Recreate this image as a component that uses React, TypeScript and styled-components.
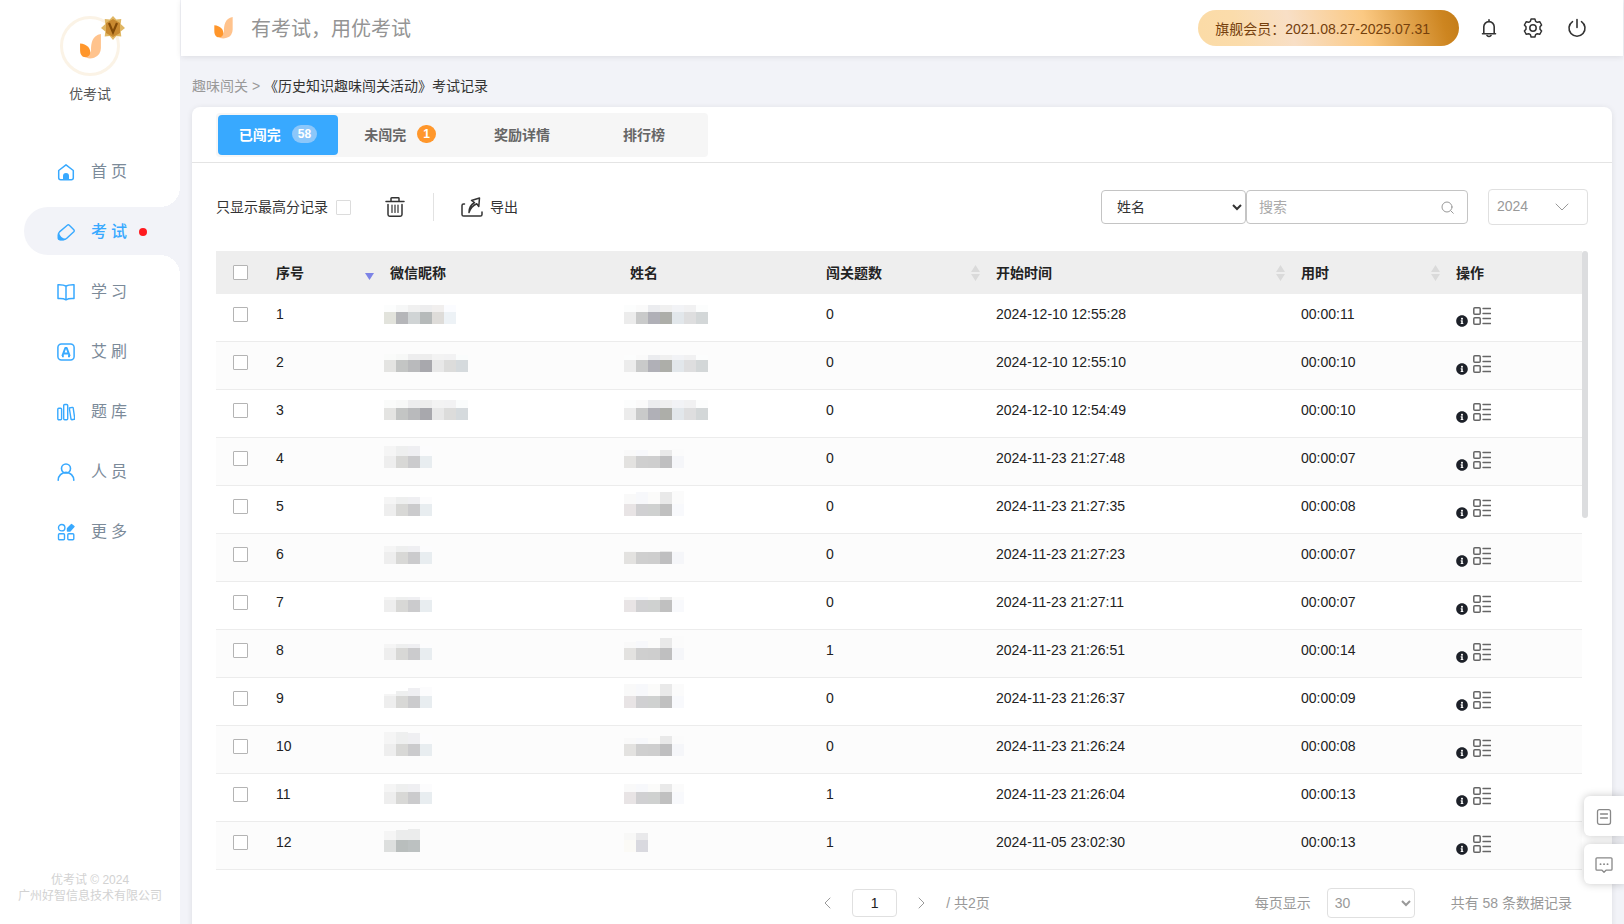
import React from "react";
import styled, { createGlobalStyle, css } from "styled-components";
import { FaInfoCircle } from "react-icons/fa";

const BLUE = "#38a9ff";

const GlobalStyle = createGlobalStyle`
  * { box-sizing: border-box; }
  body {
    margin: 0;
    background: #f2f3f8;
    color: #222;
    font: 14px/20px "Liberation Sans", "Noto Sans CJK SC", sans-serif;
  }
  button, input, select { font: inherit; color: inherit; }
`;

const Page = styled.div`
  display: flex;
  min-height: 100vh;
`;

/* ---------- sidebar ---------- */

const Sidebar = styled.aside`
  display: flex;
  flex-direction: column;
  flex: none;
  width: 180px;
  padding: 16px 0 32px;
  background: #fff;
`;

const Profile = styled.div`
  display: flex;
  flex-direction: column;
  align-items: center;
  gap: 8px;
  height: 131px;
  color: #555;
`;

const Avatar = styled.div`
  position: relative;
  width: 60px;
  height: 60px;
  border: 3px solid #fbf3e6;
  border-radius: 50%;
  display: flex;
  align-items: center;
  justify-content: center;
`;

const MemberBadge = styled.svg`
  position: absolute;
  top: -3px;
  right: -8px;
`;

const Nav = styled.nav`
  display: flex;
  flex-direction: column;
  flex: 1;
  gap: 12px;
  padding-left: 24px;
`;

const NavItem = styled.a<{ $active?: boolean }>`
  position: relative;
  display: flex;
  align-items: center;
  height: 48px;
  padding: 2px 0 0 33px;
  gap: 16px;
  border-radius: 24px 0 0 24px;
  color: #7b8a99;
  font-size: 16px;
  text-decoration: none;
  letter-spacing: 4px;
  svg { color: ${BLUE}; flex: none; }
  ${(p) =>
    p.$active &&
    css`
      background: #f2f3f8;
      color: ${BLUE};
      font-weight: 500;
      &::before,
      &::after {
        content: "";
        position: absolute;
        right: 0;
        width: 20px;
        height: 20px;
      }
      &::before {
        bottom: 100%;
        background: radial-gradient(circle at 0 0, #fff 20px, #f2f3f8 20px);
      }
      &::after {
        top: 100%;
        background: radial-gradient(circle at 0 100%, #fff 20px, #f2f3f8 20px);
      }
    `}
`;

const Dot = styled.span`
  width: 8px;
  height: 8px;
  margin-left: -8px;
  border-radius: 50%;
  background: #ff1a1f;
`;

const Copyright = styled.footer`
  color: #d2d2d2;
  font-size: 12px;
  line-height: 16px;
  text-align: center;
`;

/* ---------- top bar ---------- */

const Main = styled.main`
  display: flex;
  flex: 1;
  flex-direction: column;
  min-width: 0;
`;

const TopBar = styled.header`
  display: flex;
  align-items: center;
  height: 56px;
  margin: 0 1px;
  padding: 0 36px 0 33px;
  background: #fff;
  box-shadow: 0 1px 6px rgba(0, 0, 0, 0.09);
`;

const Slogan = styled.span`
  flex: 1;
  margin-left: 18px;
  padding-top: 2px;
  color: #949494;
  font-size: 20px;
`;

const Membership = styled.span`
  height: 36px;
  padding: 0 29px 0 17px;
  border-radius: 18px;
  background: linear-gradient(75deg, #fbdba6 0%, #fbdcab 16%, #f8dfc6 36%, #fbc983 64%, #cd8520 93%, #c37c18 100%);
  color: #75400c;
  line-height: 38px;
`;

const Tools = styled.div`
  display: flex;
  gap: 24px;
  margin-left: 20px;
`;

const IconButton = styled.button`
  display: flex;
  align-items: center;
  gap: 7px;
  padding: 0;
  border: 0;
  background: none;
  color: #333;
  cursor: pointer;
`;

const Breadcrumb = styled.div`
  padding: 20px 12px 11px;
  color: #333;
  white-space: pre;
  a { color: #999; text-decoration: none; }
  i { color: #999; font-style: normal; }
`;

/* ---------- card ---------- */

const Card = styled.section`
  flex: 1;
  margin: 0 12px;
  border-radius: 8px 8px 0 0;
  background: #fff;
  box-shadow: 0 1px 6px rgba(0, 0, 0, 0.09);
`;

const TabBar = styled.div`
  display: flex;
  height: 56px;
  padding: 6px 24px 0;
  border-bottom: 1px solid #e4e4e4;
`;

const Tabs = styled.div`
  display: grid;
  grid-template-columns: 120px 124px 120px 124px;
  height: 44px;
  padding: 2px;
  border-radius: 4px;
  background: #f6f6f6;
`;

const Tab = styled.button<{ $active?: boolean }>`
  display: flex;
  align-items: center;
  justify-content: center;
  gap: 11px;
  padding: 0;
  border: 0;
  border-radius: 4px;
  background: ${(p) => (p.$active ? BLUE : "none")};
  color: ${(p) => (p.$active ? "#fff" : "#666")};
  font-weight: bold;
`;

const Count = styled.span<{ $bg: string }>`
  min-width: 18px;
  margin-bottom: 2px;
  padding: 0 6px;
  border-radius: 9px;
  background: ${(p) => p.$bg};
  color: #fff;
  font-size: 12px;
  line-height: 18px;
  text-align: center;
`;

const Toolbar = styled.div`
  display: flex;
  align-items: center;
  height: 88px;
  padding: 0 24px;
  color: #333;
`;

const CheckLabel = styled.label`
  display: flex;
  align-items: center;
  gap: 8px;
  margin-right: 34px;
`;

const Checkbox = styled.input<{ $pale?: boolean }>`
  display: block;
  appearance: none;
  width: 15px;
  height: 15px;
  margin: 0;
  border: 1px solid ${(p) => (p.$pale ? "#dcdcdc" : "#b4b4b4")};
  border-radius: 1px;
  background: #fff;
  &:checked { background: ${BLUE}; }
`;

const Divider = styled.span`
  width: 1px;
  height: 28px;
  margin: 0 27px 0 28px;
  background: #e2e2e2;
`;

const Filters = styled.div`
  display: flex;
  align-items: center;
  margin-left: auto;
`;

const FieldSelect = styled.select`
  width: 145px;
  height: 34px;
  padding: 0 0 0 11px;
  border: 1px solid #c4c4c4;
  border-radius: 4px;
  background: #fff;
`;

const SearchBox = styled.label`
  display: flex;
  align-items: center;
  width: 222px;
  height: 34px;
  margin-right: 20px;
  padding: 0 13px 0 12px;
  border: 1px solid #c4c4c4;
  border-radius: 4px;
  color: #999;
  input {
    flex: 1;
    min-width: 0;
    padding: 0;
    border: 0;
    outline: 0;
    background: none;
  }
  input::placeholder { color: #aaa; }
`;

const YearBox = styled.div`
  display: grid;
  align-items: center;
  width: 100px;
  height: 36px;
  border: 1px solid #e0e0e0;
  border-radius: 4px;
  color: #999;
  select, svg { grid-area: 1 / 1; }
  select {
    appearance: none;
    height: 34px;
    padding: 0 8px 2px;
    border: 0;
    background: none;
  }
  svg { justify-self: end; margin-right: 18px; pointer-events: none; }
`;

/* ---------- table ---------- */

const TableArea = styled.div`
  display: flex;
  align-items: flex-start;
  padding: 0 24px;
`;

const Table = styled.table`
  flex: 1;
  width: 100%;
  min-width: 0;
  table-layout: fixed;
  border-collapse: separate;
  border-spacing: 0;
`;

const Th = styled.th`
  height: 43px;
  padding: 0 0 0 16px;
  background: #eee;
  text-align: left;
  & > div { display: flex; align-items: center; justify-content: space-between; }
  &:first-child { padding-left: 17px; }
`;

const Tr = styled.tr`
  &:nth-child(even) { background: #fcfcfc; }
`;

const cellPadding = {
  text: "12px 0 0 16px",
  check: "13px 0 0 17px",
  icons: "13px 0 0 16px",
  mosaic: "0 0 0 10px",
};

const Td = styled.td<{ $kind?: keyof typeof cellPadding }>`
  height: 48px;
  padding: ${(p) => cellPadding[p.$kind ?? "text"]};
  border-bottom: 1px solid #ececec;
  line-height: 16px;
  vertical-align: top;
  svg { display: block; }
`;

const Actions = styled.div`
  display: flex;
  align-items: flex-end;
  gap: 5px;
  button:first-child { margin-bottom: -2px; color: #1d2129; }
  button:last-child { color: #666; }
`;

const ScrollThumb = styled.div`
  flex: none;
  width: 6px;
  height: 267px;
  border-radius: 3px;
  background: #dcdddf;
`;

const Pager = styled.div`
  display: grid;
  grid-template-columns: 1fr auto 1fr;
  align-items: center;
  height: 66px;
  padding: 0 40px 0 50px;
  color: #999;
`;

const PageControls = styled.div`
  display: flex;
  align-items: center;
  grid-column: 2;
  gap: 21px;
`;

const PageInput = styled.input`
  width: 45px;
  height: 28px;
  padding: 0;
  border: 1px solid #e0e0e0;
  border-radius: 4px;
  color: #222;
  text-align: center;
`;

const PageSize = styled.div`
  display: flex;
  align-items: center;
  justify-content: flex-end;
  label { display: flex; align-items: center; gap: 16px; margin-right: 36px; }
  select {
    width: 88px;
    height: 30px;
    padding: 0 0 0 3px;
    border: 1px solid #e0e0e0;
    border-radius: 4px;
    background: #fff;
  }
`;

const FloatDock = styled.div`
  position: fixed;
  right: 0;
  bottom: 40px;
  display: flex;
  flex-direction: column;
  gap: 8px;
`;

const FloatButton = styled.button`
  display: flex;
  align-items: center;
  justify-content: center;
  width: 40px;
  height: 40px;
  padding: 2px 0 0;
  border: 0;
  border-radius: 6px 0 0 6px;
  background: #fff;
  color: #888;
  box-shadow: 0 0 8px rgba(0, 0, 0, 0.22);
`;

/* ---------- drawings ---------- */

const Stroke = ({
  size = 18,
  h,
  box,
  w = 1.4,
  children,
}: {
  size?: number;
  h?: number;
  box?: string;
  w?: number;
  children: React.ReactNode;
}) => (
  <svg
    width={size}
    height={h ?? size}
    viewBox={box ?? `0 0 ${size} ${h ?? size}`}
    fill="none"
    stroke="currentColor"
    strokeWidth={w}
    strokeLinecap="round"
    strokeLinejoin="round"
    aria-hidden
  >
    {children}
  </svg>
);

const Logo = ({ width, height }: { width: number; height: number }) => (
  <svg width={width} height={height} viewBox="0 0 20 24" aria-hidden>
    <path d="M20 0v13.500a10 10 0 0 1-17.500 6.500c3 1 7.500 0 8-4.500C10.500 9 11.500 1.500 20 0Z" fill="#ffc38d" />
    <path d="M0 9c6.500.5 9.800 4.500 9.800 8.500 0 3-2 4.700-4.600 4.700C1.500 22.200 0 19 0 15.500Z" fill="#ff962b" />
  </svg>
);

const navItems: { label: string; icon: React.ReactNode; active?: boolean }[] = [
  {
    label: "首页",
    icon: (
      <Stroke w={1.5}>
        <path d="M1.700 7.500 9 1.800l7.300 5.700v7.200a2 2 0 0 1-2 2H3.700a2 2 0 0 1-2-2Z" />
        <path d="M6 17v-4a3 3 0 0 1 6 0v4Z" fill="currentColor" stroke="none" />
      </Stroke>
    ),
  },
  {
    label: "考试",
    active: true,
    icon: (
      <Stroke w={1.400}>
        <path d="M10.300 2.200a1.500 1.500 0 0 1 2 0l4.500 4.500a1.500 1.500 0 0 1 0 2L9.500 15.600a5 5 0 0 1-3.500 1.300H3.200a2 2 0 0 1-2-2v-2.600a5 5 0 0 1 1.300-3.400Z" />
        <path d="M2 9.500c.8 3.600 3.200 6 7 6.500-1 1-2 1.200-3.500 1.200H3a2 2 0 0 1-2-2v-3Z" fill="currentColor" stroke="none" />
      </Stroke>
    ),
  },
  {
    label: "学习",
    icon: (
      <Stroke w={1.500}>
        <path d="M9 3.200C7 1.700 4.500 1.600 1 1.700v13.800c3-.2 6 0 8 1.300 2-1.300 5-1.500 8-1.300V1.700c-3.500-.1-6 0-8 1.500ZM9 3.200v13.600" />
      </Stroke>
    ),
  },
  {
    label: "艾刷",
    icon: (
      <Stroke w={1.500}>
        <rect x="0.900" y="0.900" width="16.200" height="16.200" rx="3.500" />
        <path d="m5.300 13 3-8h1.400l3 8M6.600 10.400h5M5 13.200h1.800M11 13.200h2" strokeWidth="2" strokeLinecap="butt" />
      </Stroke>
    ),
  },
  {
    label: "题库",
    icon: (
      <Stroke w={1.400}>
        <rect x="0.800" y="5.200" width="3.800" height="11.500" rx="1" />
        <rect x="6.700" y="1.500" width="4" height="15.200" rx="1" />
        <path d="m12.300 5 3-.6c.5-.1.8.2.9.6l1.500 10.300c.1.600-.1.900-.6 1l-2.200.4c-.5.1-.8-.2-.9-.7Z" />
      </Stroke>
    ),
  },
  {
    label: "人员",
    icon: (
      <Stroke w={1.600}>
        <circle cx="9" cy="5.500" r="4.500" />
        <path d="M1.200 17.200a7.800 7.800 0 0 1 15.600 0" />
      </Stroke>
    ),
  },
  {
    label: "更多",
    icon: (
      <Stroke w={1.400}>
        <circle cx="4.700" cy="4.700" r="3.200" />
        <rect x="1.500" y="10.800" width="6" height="6" rx="1" />
        <rect x="10.800" y="10.800" width="6" height="6" rx="1" />
        <path d="m10.500 5.500 4-4 2.500 2-4 4.500h-2.500Z" fill="currentColor" />
      </Stroke>
    ),
  },
];

const gearPoints = "M8.100 1h3.800l.7 2.300 1.700 1 2.400-.6 1.900 3.300-1.600 1.800v2.400l1.600 1.800-1.900 3.300-2.400-.6-1.700 1-.7 2.300H8.100l-.7-2.300-1.700-1-2.400.6L1.400 13 3 11.200V8.800L1.400 7l1.900-3.300 2.400.6 1.700-1Z";

const ListIcon = () => (
  <Stroke size={18} w={1.500}>
    <rect x="0.800" y="0.800" width="6.400" height="6.400" rx="1" />
    <rect x="0.800" y="10.800" width="6.400" height="6.400" rx="1" />
    <path d="M10 1.500h7.500M10 6.500h7.500M10 11.500h7.500M10 16.500h7.500" strokeWidth="1.300" />
  </Stroke>
);

const SortArrows = () => (
  <svg width="9" height="16" viewBox="0 0 9 16" fill="#dadada" aria-hidden>
    <path d="M4.500 0 9 7H0ZM0 9h9l-4.500 7Z" />
  </svg>
);

const SortedDown = () => (
  <svg width="9" height="16" viewBox="0 0 9 16" fill="#7c83e6" aria-hidden>
    <path d="M0 8h9l-4.500 7Z" />
  </svg>
);

/* A masked value: one band of strong tiles under a paler band of varying height. */
type MaskBand = { top: number[] | number; tops: string[]; tiles: string[] };

const Mosaic = ({ top, tops, tiles }: MaskBand) => (
  <svg width={tiles.length * 12} height="30" shapeRendering="crispEdges" role="img" aria-label="已打码">
    {tiles.map((c, i) => {
      const h = Array.isArray(top) ? top[i] : top;
      return (
        <g key={i}>
          <rect x={i * 12} y={18 - h} width="12" height={h} fill={tops[i]} />
          <rect x={i * 12} y="18" width="12" height="12" fill={c} />
        </g>
      );
    })}
  </svg>
);

const longTops = ["#fcfdfd", "#fafafa", "#ebecef", "#f0f0f0", "#f2f3f6", "#f1f1f2", "#fcfdfd"];
const longName = ["#ececec", "#c9caca", "#b0b0b7", "#adaea9", "#e2e7eb", "#dededf", "#d3d7d8"];
const nickTops = ["#fafbfa", "#f7f8f7", "#ededee", "#ededed", "#f3f3f3", "#f2f2f3", "#fafcfc"];
const nickLong = ["#e4e4e2", "#c3c5c4", "#b9babc", "#a8a8ad", "#e8e8e8", "#dcdcdb", "#d5dadd"];
const shortTops = ["#f5f5f5", "#eeefef", "#efeff2", "#fcfcfd"];
const shortNick = ["#eeeeee", "#d8d8d6", "#cbcbcd", "#e8edf0"];
const nameTops = ["#f9f9f9", "#f7f8fb", "#fbfbfa", "#e9e9e9", "#fbfbfb"];
const nameWhite = ["#e8e4e5", "#d0d0d2", "#cfd1d0", "#c0c0c0", "#f8f9fc"];
const nameGray = ["#e3e2e0", "#cfcfcf", "#cecece", "#bfbfc0", "#f5f6f9"];

const nick = (top: number[] | number): MaskBand => ({ top, tops: shortTops, tiles: shortNick });
const name = (top: number[] | number, tiles = nameWhite): MaskBand => ({ top, tops: nameTops, tiles });

const rows: { nick: MaskBand; name: MaskBand; score: number; start: string; used: string }[] = [
  {
    nick: {
      top: 7,
      tops: ["#fcfdfd", "#f6f7f7", "#f0f0f0", "#ededee", "#f1efee", "#fbfcff"],
      tiles: ["#e2e3dc", "#b5b6b9", "#d0d4d5", "#b6baba", "#dedcd9", "#edf2f6"],
    },
    name: { top: 7, tops: longTops, tiles: longName },
    score: 0,
    start: "2024-12-10 12:55:28",
    used: "00:00:11",
  },
  { nick: { top: [6, 6, 6, 6, 6, 6, 5], tops: nickTops, tiles: nickLong }, name: { top: 5, tops: longTops, tiles: longName }, score: 0, start: "2024-12-10 12:55:10", used: "00:00:10" },
  { nick: { top: 8, tops: nickTops, tiles: nickLong }, name: { top: 8, tops: longTops, tiles: longName }, score: 0, start: "2024-12-10 12:54:49", used: "00:00:10" },
  { nick: nick(10), name: name([6, 6, 6, 6, 7], nameGray), score: 0, start: "2024-11-23 21:27:48", used: "00:00:07" },
  { nick: nick(7), name: name([10, 12, 12, 12, 13]), score: 0, start: "2024-11-23 21:27:35", used: "00:00:08" },
  { nick: nick(6), name: name([1, 0, 0, 1, 1], nameGray), score: 0, start: "2024-11-23 21:27:23", used: "00:00:07" },
  { nick: nick(3), name: name(3), score: 0, start: "2024-11-23 21:27:11", used: "00:00:07" },
  { nick: nick(4), name: name([6, 7, 8, 10, 12], nameGray), score: 1, start: "2024-11-23 21:26:51", used: "00:00:14" },
  { nick: nick([2, 5, 8, 9]), name: name(12), score: 0, start: "2024-11-23 21:26:37", used: "00:00:09" },
  { nick: nick([12, 12, 11, 10]), name: name([6, 6, 6, 8, 8], nameGray), score: 0, start: "2024-11-23 21:26:24", used: "00:00:08" },
  { nick: nick(8), name: name(8), score: 1, start: "2024-11-23 21:26:04", used: "00:00:13" },
  {
    nick: { top: [9, 10, 11], tops: ["#f5f5f5", "#ebecec", "#ebecec"], tiles: ["#dddfde", "#b9bebd", "#bcc1c1"] },
    name: { top: 7, tops: ["#f8f8f7", "#e9e9eb"], tiles: ["#fbfaf6", "#d9d9df"] },
    score: 1,
    start: "2024-11-05 23:02:30",
    used: "00:00:13",
  },
];

const columnWidths = [44, 114, 240, 196, 170, 305, 155, 142];

/* ---------- page ---------- */

export default function App() {
  return (
    <Page>
      <GlobalStyle />
      <Sidebar>
        <Profile>
          <Avatar>
            <Logo width={21} height={25} />
            <MemberBadge width="24" height="24" viewBox="0 0 24 24" aria-hidden>
              <path
                d="m12 0 3.300 3.600 5-.6-.6 5L24 12l-4.300 3.600.6 5-5-.6L12 24l-3.300-4-5 .6.6-5L0 12l4.300-4-.6-5 5 .6Z"
                fill="#e0b765"
              />
              <path d="m12 3 7 4v10l-7 4-7-4V7Z" fill="#c98a30" />
              <path d="m8 7 4 9.500L16 7" fill="none" stroke="#824b07" strokeWidth="2.200" />
            </MemberBadge>
          </Avatar>
          <span>优考试</span>
        </Profile>
        <Nav>
          {navItems.map((item) => (
            <NavItem key={item.label} href="#" $active={item.active}>
              {item.icon}
              <span>{item.label}</span>
              {item.active && <Dot />}
            </NavItem>
          ))}
        </Nav>
        <Copyright>
          优考试 © 2024
          <br />
          广州好智信息技术有限公司
        </Copyright>
      </Sidebar>

      <Main>
        <TopBar>
          <Logo width={19} height={22} />
          <Slogan>有考试，用优考试</Slogan>
          <Membership>旗舰会员：2021.08.27-2025.07.31</Membership>
          <Tools>
            <IconButton aria-label="通知">
              <Stroke size={20} w={1.600}>
                <path d="M4.800 15.500V8.800a5.200 5.200 0 0 1 10.400 0v6.700M3.500 15.700h13M10 3.500V1.800M8 17.500q2 2 4 0" />
              </Stroke>
            </IconButton>
            <IconButton aria-label="设置">
              <Stroke size={20} w={1.500}>
                <path d={gearPoints} />
                <circle cx="10" cy="10" r="3.200" />
              </Stroke>
            </IconButton>
            <IconButton aria-label="退出">
              <Stroke size={20} w={1.600}>
                <path d="M5.500 3.600a8 8 0 1 0 9 0M10 1.500v8" />
              </Stroke>
            </IconButton>
          </Tools>
        </TopBar>

        <Breadcrumb>
          <a href="#">趣味闯关</a>
          <i>{" > "}</i>《历史知识趣味闯关活动》考试记录
        </Breadcrumb>

        <Card>
          <TabBar>
            <Tabs>
              <Tab $active>
                已闯完<Count $bg="#8cc7fa">58</Count>
              </Tab>
              <Tab>
                未闯完<Count $bg="#ff972b">1</Count>
              </Tab>
              <Tab>奖励详情</Tab>
              <Tab>排行榜</Tab>
            </Tabs>
          </TabBar>

          <Toolbar>
            <CheckLabel>
              只显示最高分记录
              <Checkbox type="checkbox" $pale />
            </CheckLabel>
            <IconButton aria-label="删除">
              <Stroke size={20} w={1.500}>
                <path d="M1 4.500h18M6 4V1.500q0-.7.700-.7h6.600q.7 0 .7.700V4M3 7.500v10q0 1.700 1.700 1.700h10.600q1.700 0 1.700-1.700v-10" />
                <path d="M7 8v7.500M10 8v7.500M13 8v7.500" strokeWidth="1.200" />
              </Stroke>
            </IconButton>
            <Divider />
            <IconButton>
              <Stroke size={22} h={20} w={1.500}>
                <path d="M3.500 7H2.600Q1 7 1 8.600v8.800Q1 19 2.600 19h16.800q1.600 0 1.600-1.600V15" />
                <path d="M8 15.500C8 10 10 7.500 13.500 5.500L10.500 3.500 18.500 1l-.7 8.500-2.100-2.700C12 8.500 9.500 11 8 15.500Z" />
              </Stroke>
              导出
            </IconButton>
            <Filters>
              <FieldSelect aria-label="搜索字段" defaultValue="name">
                <option value="name">姓名</option>
              </FieldSelect>
              <SearchBox>
                <input type="text" placeholder="搜索" aria-label="搜索" />
                <Stroke size={13} w={1}>
                  <circle cx="6" cy="6" r="5" />
                  <path d="m9.800 9.800 2.500 2.500" />
                </Stroke>
              </SearchBox>
              <YearBox>
                <select aria-label="年份" defaultValue="2024">
                  <option>2024</option>
                </select>
                <Stroke size={14} h={8} w={1}>
                  <path d="m1 1 6 6 6-6" />
                </Stroke>
              </YearBox>
            </Filters>
          </Toolbar>

          <TableArea>
            <Table>
              <colgroup>
                {columnWidths.map((w, i) => (
                  <col key={i} width={w} />
                ))}
              </colgroup>
              <thead>
                <tr>
                  <Th>
                    <Checkbox type="checkbox" aria-label="全选" />
                  </Th>
                  <Th>
                    <div>序号<SortedDown /></div>
                  </Th>
                  <Th>微信昵称</Th>
                  <Th>姓名</Th>
                  <Th>
                    <div>闯关题数<SortArrows /></div>
                  </Th>
                  <Th>
                    <div>开始时间<SortArrows /></div>
                  </Th>
                  <Th>
                    <div>用时<SortArrows /></div>
                  </Th>
                  <Th>操作</Th>
                </tr>
              </thead>
              <tbody>
                {rows.map((row, i) => (
                  <Tr key={i}>
                    <Td $kind="check">
                      <Checkbox type="checkbox" aria-label={`选择第${i + 1}条`} />
                    </Td>
                    <Td>{i + 1}</Td>
                    <Td $kind="mosaic">
                      <Mosaic {...row.nick} />
                    </Td>
                    <Td $kind="mosaic">
                      <Mosaic {...row.name} />
                    </Td>
                    <Td>{row.score}</Td>
                    <Td>{row.start}</Td>
                    <Td>{row.used}</Td>
                    <Td $kind="icons">
                      <Actions>
                        <IconButton aria-label="详情">
                          <FaInfoCircle size={12} />
                        </IconButton>
                        <IconButton aria-label="答题记录">
                          <ListIcon />
                        </IconButton>
                      </Actions>
                    </Td>
                  </Tr>
                ))}
              </tbody>
            </Table>
            <ScrollThumb />
          </TableArea>

          <Pager>
            <PageControls>
              <IconButton aria-label="上一页">
                <Stroke size={7} h={12} w={1}>
                  <path d="M6 1 1 6l5 5" stroke="#999" />
                </Stroke>
              </IconButton>
              <PageInput type="text" defaultValue="1" aria-label="页码" />
              <IconButton aria-label="下一页">
                <Stroke size={7} h={12} w={1}>
                  <path d="m1 1 5 5-5 5" stroke="#999" />
                </Stroke>
              </IconButton>
              <span>/ 共2页</span>
            </PageControls>
            <PageSize>
              <label>
                每页显示
                <select defaultValue="30">
                  <option>30</option>
                </select>
              </label>
              共有 58 条数据记录
            </PageSize>
          </Pager>
        </Card>
      </Main>

      <FloatDock>
        <FloatButton aria-label="文档">
          <Stroke size={16} w={1.300}>
            <rect x="1.500" y="0.700" width="13" height="14.600" rx="2" />
            <path d="M4.500 5h7M4.500 9h7" />
          </Stroke>
        </FloatButton>
        <FloatButton aria-label="客服">
          <Stroke size={18} h={16} w={1.300}>
            <path d="M2 .8h14q1 0 1 1v10.400q0 1-1 1h-5l-2 2-2-2H2q-1 0-1-1V1.800q0-1 1-1Z" />
            <path d="M5.500 7.200h.1M9 7.200h.1M12.500 7.200h.1" strokeWidth="1.800" />
          </Stroke>
        </FloatButton>
      </FloatDock>
    </Page>
  );
}
